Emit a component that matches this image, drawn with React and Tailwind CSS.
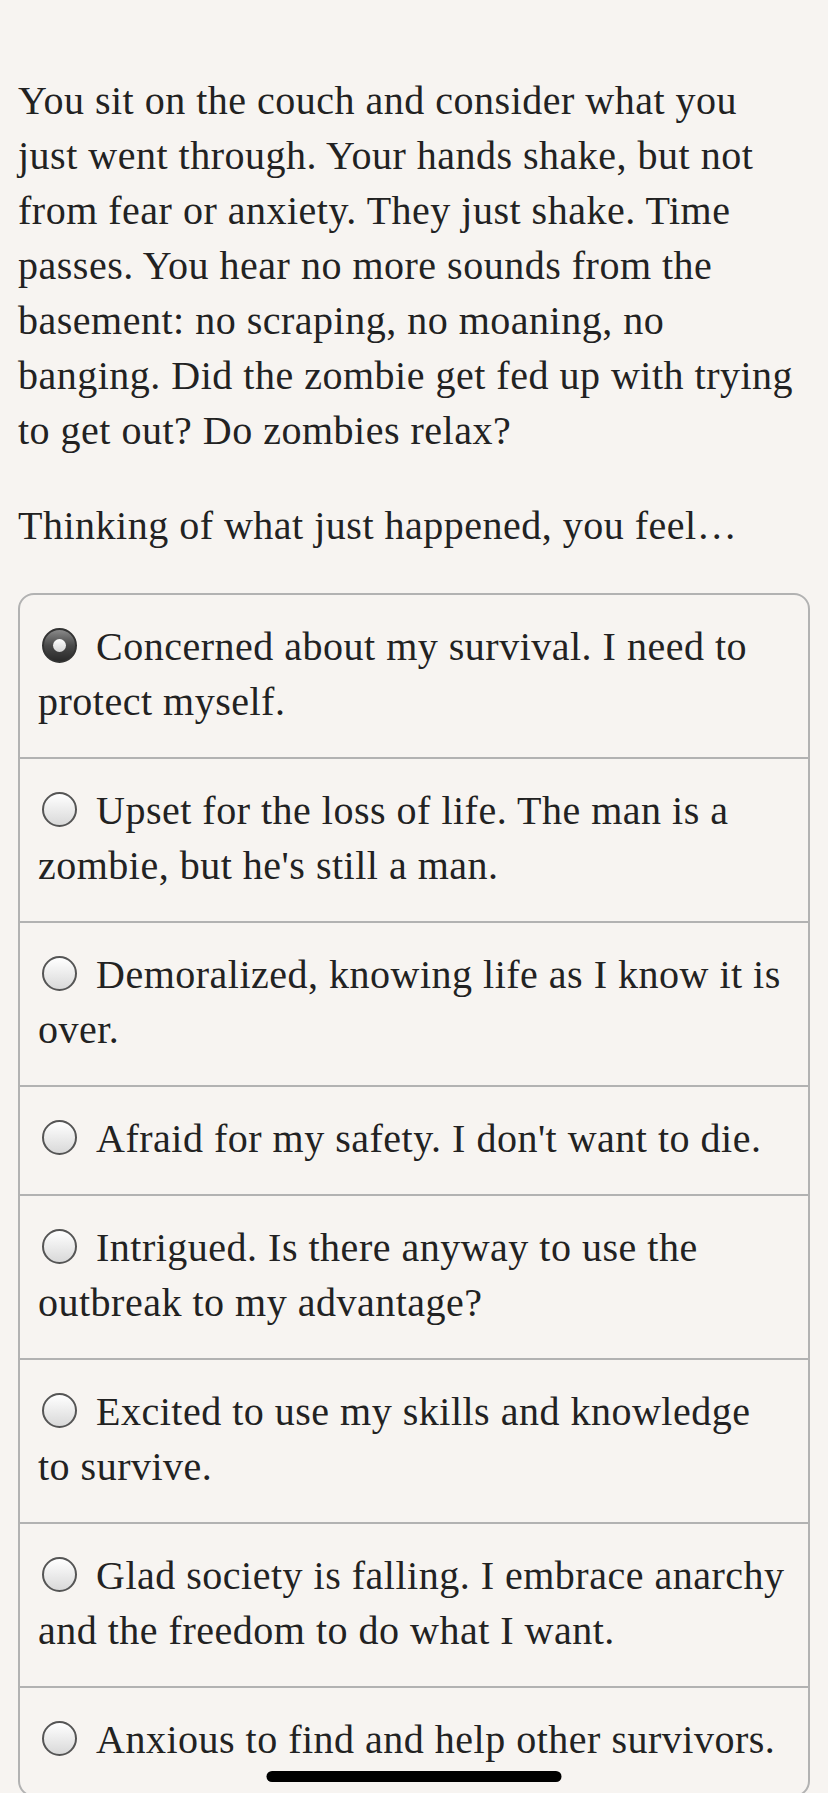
import React from "react";

const options = [
  "Concerned about my survival. I need to protect myself.",
  "Upset for the loss of life. The man is a zombie, but he's still a man.",
  "Demoralized, knowing life as I know it is over.",
  "Afraid for my safety. I don't want to die.",
  "Intrigued. Is there anyway to use the outbreak to my advantage?",
  "Excited to use my skills and knowledge to survive.",
  "Glad society is falling. I embrace anarchy and the freedom to do what I want.",
  "Anxious to find and help other survivors.",
];

function Radio({ checked }) {
  if (checked) {
    return (
      <span className="inline-block w-[35px] h-[35px] rounded-full bg-gradient-to-b from-[#8a8a8a] via-[#4a4a4a] to-[#2a2a2a] border-2 border-[#333] ml-1 mr-[19px] align-[-3px]">
        <span className="block w-[13px] h-[13px] mx-auto mt-[9px] rounded-full bg-gradient-to-b from-white to-[#d4d4d4]"></span>
      </span>
    );
  }
  return (
    <span className="inline-block w-[35px] h-[35px] rounded-full bg-gradient-to-b from-white to-[#d9d9d9] border-2 border-[#555] ml-1 mr-[19px] align-[-3px]"></span>
  );
}

export default function App() {
  const selected = 0;

  return (
    <main
      className="relative min-h-[1793px] bg-[#f7f4f1] text-[#222] text-[40px] leading-[55px] tracking-[0.5px]"
      style={{ fontFamily: '"Liberation Serif", "Times New Roman", serif' }}
    >
      <div className="px-[18px] pt-[73px] pb-[3px]">
        {/* Story text */}
        <p className="pr-[6px]">
          You sit on the couch and consider what you just went through. Your
          hands shake, but not from fear or anxiety. They just shake. Time
          passes. You hear no more sounds from the basement: no scraping, no
          moaning, no banging. Did the zombie get fed up with trying to get
          out? Do zombies relax?
        </p>
        <p className="mt-[40px]">Thinking of what just happened, you feel…</p>

        {/* Choices */}
        <div className="mt-[40px] border-2 border-[#b2b2b2] rounded-[16px] overflow-hidden">
          {options.map((text, i) => (
            <div
              key={i}
              className={
                "pl-[18px] pr-[20px] pt-[24px] pb-[28px]" +
                (i > 0 ? " border-t-2 border-[#b2b2b2]" : "")
              }
            >
              <Radio checked={i === selected} />
              {text}
            </div>
          ))}
        </div>
      </div>

      {/* home indicator */}
      <div className="absolute bottom-[18px] left-1/2 -translate-x-1/2 w-[295px] h-[11px] rounded-full bg-black"></div>
    </main>
  );
}
